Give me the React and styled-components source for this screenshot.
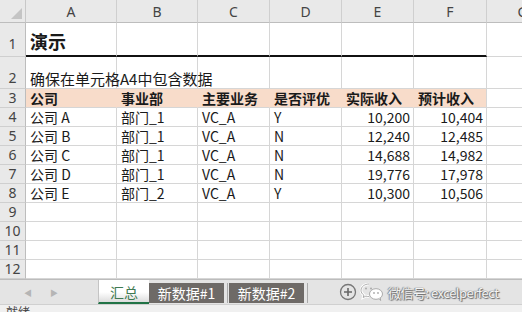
import React from "react";
import styled, { createGlobalStyle } from "styled-components";

const GlobalStyle = createGlobalStyle`
  html, body {
    margin: 0;
    padding: 0;
    background: #ffffff;
    overflow: hidden;
  }
  body {
    font-family: "Noto Sans CJK SC", "Noto Sans", sans-serif;
  }
`;

const cols = ["A", "B", "C", "D", "E", "F", "G"];

const rows = [
  ["公司 A", "部门_1", "VC_A", "Y", "10,200", "10,404"],
  ["公司 B", "部门_1", "VC_A", "N", "12,240", "12,485"],
  ["公司 C", "部门_1", "VC_A", "N", "14,688", "14,982"],
  ["公司 D", "部门_1", "VC_A", "N", "19,776", "17,978"],
  ["公司 E", "部门_2", "VC_A", "Y", "10,300", "10,506"],
];

const headers = ["公司", "事业部", "主要业务", "是否评优", "实际收入", "预计收入"];

function App() {
  return (
    <>
      <GlobalStyle />
      <Window>
        <Sheet>
          <Corner>
            <CornerMark />
          </Corner>
          {cols.map((c) => (
            <ColHead key={c}>{c}</ColHead>
          ))}

          <RowHead $pad={3}>1</RowHead>
          <Cell $size={18} $bold $thick>演示</Cell>
          {[1, 2, 3, 4, 5].map((i) => (
            <Cell key={i} $thick />
          ))}
          <Cell />

          <RowHead $pad={1}>2</RowHead>
          <Cell $size={15} $over>确保在单元格A4中包含数据</Cell>
          {[1, 2, 3, 4, 5, 6].map((i) => (
            <Cell key={i} />
          ))}

          <RowHead>3</RowHead>
          {headers.map((h, i) => (
            <Cell key={h} $bold $fill $last={i === 5}>
              {h}
            </Cell>
          ))}
          <Cell />

          {rows.map((r, i) => (
            <React.Fragment key={i}>
              <RowHead>{i + 4}</RowHead>
              {r.map((v, j) => (
                <Cell key={j} $right={j >= 4}>
                  {v}
                </Cell>
              ))}
              <Cell />
            </React.Fragment>
          ))}

          {[9, 10, 11, 12].map((n) => (
            <React.Fragment key={n}>
              <RowHead>{n}</RowHead>
              {cols.map((c) => (
                <Cell key={c} />
              ))}
            </React.Fragment>
          ))}
        </Sheet>

        <TabBar>
          <Nav>
            <Arrow>◀</Arrow>
            <Arrow>▶</Arrow>
          </Nav>
          <Tab $active>汇总</Tab>
          <Tab>新数据#1</Tab>
          <Tab>新数据#2</Tab>
          <AddButton>
            <svg width="18" height="18" viewBox="0 0 18 18">
              <circle cx="9" cy="9" r="7.5" fill="none" stroke="#777" strokeWidth="1.3" />
              <path d="M9 5v8M5 9h8" stroke="#666" strokeWidth="1.6" />
            </svg>
          </AddButton>
          <Watermark>
            <svg width="26" height="22" viewBox="0 0 26 22">
              <path
                d="M10 3c-4.4 0-8 2.8-8 6.3 0 2 1.1 3.7 2.9 4.9l-.7 2.3 2.7-1.4c1 .3 2 .5 3.1.5"
                fill="none"
                stroke="#fff"
                strokeWidth="2.6"
              />
              <path
                d="M10 3c-4.4 0-8 2.8-8 6.3 0 2 1.1 3.7 2.9 4.9l-.7 2.3 2.7-1.4c1 .3 2 .5 3.1.5"
                fill="none"
                stroke="#999"
                strokeWidth="0.8"
              />
              <ellipse cx="17" cy="13" rx="6.5" ry="5.3" fill="#fff" stroke="#999" strokeWidth="0.8" />
              <path d="M20 17.5l1.6 2-0.3-2.8" fill="#fff" stroke="#999" strokeWidth="0.8" />
              <circle cx="7" cy="7.5" r="1" fill="#aaa" />
              <circle cx="12" cy="7.5" r="1" fill="#aaa" />
              <circle cx="15" cy="12" r="0.9" fill="#aaa" />
              <circle cx="19" cy="12" r="0.9" fill="#aaa" />
            </svg>
            <WatermarkText>微信号: excelperfect</WatermarkText>
          </Watermark>
        </TabBar>
        <StatusBar>就绪</StatusBar>
      </Window>
    </>
  );
}

export default App;

const Window = styled.div`
  width: 522px;
  height: 312px;
  display: flex;
  flex-direction: column;
  overflow: hidden;
  background: #ffffff;
`;

const Sheet = styled.div`
  display: grid;
  grid-template-columns: 26px 91px 81px 72px 72px 72px 73px 72px;
  grid-template-rows: 23px 34px 32px repeat(10, 19px);
  height: 279px;
  overflow: hidden;
`;

const Corner = styled.div`
  position: relative;
  background: #e9e9e9;
  border-right: 1px solid #c8c8c8;
  border-bottom: 1px solid #bdbdbd;
  box-sizing: border-box;
`;

const CornerMark = styled.div`
  position: absolute;
  right: 3px;
  bottom: 3px;
  width: 0;
  height: 0;
  border-left: 11px solid transparent;
  border-bottom: 11px solid #c4c4c4;
`;

const ColHead = styled.div`
  background: #e9e9e9;
  border-right: 1px solid #cfcfcf;
  border-bottom: 1px solid #bdbdbd;
  box-sizing: border-box;
  display: flex;
  align-items: center;
  justify-content: center;
  font-family: "Noto Sans", sans-serif;
  font-size: 14px;
  color: #444444;
  padding-top: 1px;
`;

const RowHead = styled.div`
  background: #e9e9e9;
  border-right: 1px solid #bdbdbd;
  border-bottom: 1px solid #cfcfcf;
  box-sizing: border-box;
  display: flex;
  align-items: flex-end;
  justify-content: center;
  font-family: "Noto Sans", sans-serif;
  font-size: 14px;
  line-height: 18px;
  color: #444444;
  padding-bottom: ${(p) => (p.$pad || 0)}px;
`;

const Cell = styled.div`
  box-sizing: border-box;
  border-right: 1px solid ${(p) => (p.$fill && !p.$last ? "#f8dcca" : "#d6d6d6")};
  border-bottom: ${(p) => (p.$thick ? "2px solid #111111" : "1px solid #d6d6d6")};
  background: ${(p) => (p.$fill ? "#f8dcca" : "transparent")};
  display: flex;
  align-items: flex-end;
  justify-content: ${(p) => (p.$right ? "flex-end" : "flex-start")};
  padding: 0 3px 0 4px;
  font-size: ${(p) => p.$size || 14}px;
  font-weight: ${(p) => (p.$bold ? 700 : 400)};
  line-height: ${(p) => (p.$size === 18 ? "28px" : "18px")};
  color: #1a1a1a;
  white-space: nowrap;
  overflow: ${(p) => (p.$over ? "visible" : "hidden")};
  position: relative;
  z-index: ${(p) => (p.$over ? 1 : 0)};
`;

const TabBar = styled.div`
  height: 25px;
  box-sizing: border-box;
  background: #e4e4e4;
  border-top: 1px solid #bcbcbc;
  display: flex;
  align-items: flex-end;
  position: relative;
  white-space: nowrap;
`;

const Nav = styled.div`
  width: 98px;
  flex-shrink: 0;
  height: 100%;
  display: flex;
  align-items: center;
  padding-left: 24px;
  gap: 18px;
  box-sizing: border-box;
`;

const Arrow = styled.span`
  font-size: 8px;
  color: #b5b5b5;
`;

const Tab = styled.div`
  flex-shrink: 0;
  height: ${(p) => (p.$active ? "24px" : "20px")};
  box-sizing: border-box;
  width: ${(p) => (p.$active ? "51px" : "78px")};
  margin-bottom: ${(p) => (p.$active ? "0" : "1px")};
  border-right: ${(p) => (p.$active ? "none" : "3px solid #e4e4e4")};
  box-shadow: ${(p) => (p.$active ? "none" : "1px 0 0 #a9a9a9")};
  margin-right: ${(p) => (p.$active ? "0" : "2px")};
  background: ${(p) =>
    p.$active ? "linear-gradient(#ffffff, #ffffff 55%, #dcdcdc)" : "#6e6a67"};
  border-bottom: ${(p) => (p.$active ? "2px solid #217346" : "none")};
  border-left: ${(p) => (p.$active ? "1px solid #c4c4c4" : "none")};
  color: ${(p) => (p.$active ? "#3f7a52" : "#ffffff")};
  display: flex;
  align-items: center;
  justify-content: center;
  font-size: 14px;
  padding-top: ${(p) => (p.$active ? "1px" : "0")};
`;

const AddButton = styled.div`
  flex-shrink: 0;
  height: 100%;
  display: flex;
  align-items: center;
  margin-left: 30px;
  padding-top: 1px;
`;

const Watermark = styled.div`
  flex-shrink: 0;
  height: 100%;
  display: flex;
  align-items: center;
  margin-left: 2px;
  gap: 3px;
`;

const WatermarkText = styled.span`
  font-size: 13px;
  letter-spacing: -0.5px;
  color: #f4f4f4;
  text-shadow: 1px 1px 1px #666, -1px 0 1px #888, 0 0 1px #555;
  white-space: nowrap;
`;

const StatusBar = styled.div`
  flex: 1;
  background: #f0f0f0;
  border-top: 1px solid #d0d0d0;
  font-size: 12px;
  line-height: 14px;
  color: #444;
  padding-left: 6px;
  overflow: hidden;
`;
